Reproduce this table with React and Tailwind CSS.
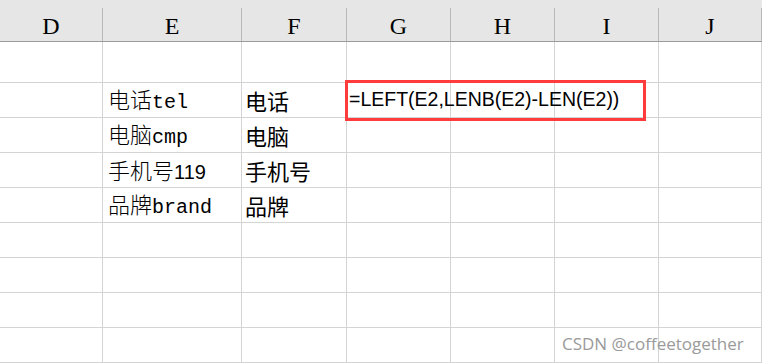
import React from "react";

const columns = ["D", "E", "F", "G", "H", "I", "J"];
const colTemplate = "grid-cols-[103px_139px_105px_104px_104px_104px_103px]";

// column E holds mixed text: CJK part, then latin part in its own face
const rows = [
  { cn: "电话", latin: "tel", mono: true, short: "电话" },
  { cn: "电脑", latin: "cmp", mono: true, short: "电脑" },
  { cn: "手机号", latin: "119", mono: false, short: "手机号" },
  { cn: "品牌", latin: "brand", mono: true, short: "品牌" },
];

const cjk = "font-['Noto_Sans_CJK_SC',sans-serif]";

function Cell({ children, className = "" }) {
  return (
    <div
      className={
        "border-r border-b border-[#d4d4d4] flex items-center overflow-visible whitespace-nowrap " +
        className
      }
    >
      {children}
    </div>
  );
}

function MixedText({ row }) {
  return (
    <span className="flex items-baseline pl-[5px] text-black">
      <span className={cjk + " text-[22px] font-light leading-none"}>{row.cn}</span>
      <span
        className={
          row.mono
            ? "font-['Liberation_Mono',monospace] text-[20px] leading-none"
            : "font-['Liberation_Sans',sans-serif] text-[20px] leading-none"
        }
      >
        {row.latin}
      </span>
    </span>
  );
}

export default function App() {
  const blankRows = 4;

  return (
    <div className="relative w-[762px] h-[363px] overflow-hidden bg-white">
      {/* column header strip */}
      <div className={"grid h-[42px] bg-[#e6e6e6] border-b border-[#9a9a9a] " + colTemplate}>
        {columns.map((c) => (
          <div key={c} className="flex flex-col">
            <div className="h-[8px]" />
            <div className="flex-1 border-r border-[#b8b8b8] flex items-center justify-center font-['Liberation_Serif',serif] text-[24px] text-black leading-none pt-[3px]">
              {c}
            </div>
          </div>
        ))}
      </div>

      {/* row 1 */}
      <div className={"grid h-[41px] " + colTemplate}>
        {columns.map((c) => (
          <Cell key={c} />
        ))}
      </div>

      {/* data rows */}
      {rows.map((row, i) => (
        <div key={i} className={"grid h-[35px] " + colTemplate}>
          <Cell />
          <Cell>
            <MixedText row={row} />
          </Cell>
          <Cell>
            <span className={cjk + " pl-[3px] text-[22px] font-normal text-black leading-none"}>
              {row.short}
            </span>
          </Cell>
          <Cell className="relative z-10">
            {i === 0 && (
              <span className="pl-[2px] font-['Liberation_Sans',sans-serif] text-[19.5px] text-black leading-none">
                =LEFT(E2,LENB(E2)-LEN(E2))
              </span>
            )}
          </Cell>
          <Cell />
          <Cell />
          <Cell />
        </div>
      ))}

      {Array.from({ length: blankRows }).map((_, i) => (
        <div key={"b" + i} className={"grid h-[35px] " + colTemplate}>
          {columns.map((c) => (
            <Cell key={c} />
          ))}
        </div>
      ))}

      {/* highlight around the formula */}
      <div className="absolute left-[345px] top-[80px] w-[301px] h-[41px] border-[3px] border-[#ff3b3b] z-20 pointer-events-none" />

      {/* watermark */}
      <div className="absolute left-[562px] top-[331px] font-['Open_Sans',sans-serif] text-[17px] text-[#9a9a9a] z-30">
        CSDN @coffeetogether
      </div>
    </div>
  );
}
